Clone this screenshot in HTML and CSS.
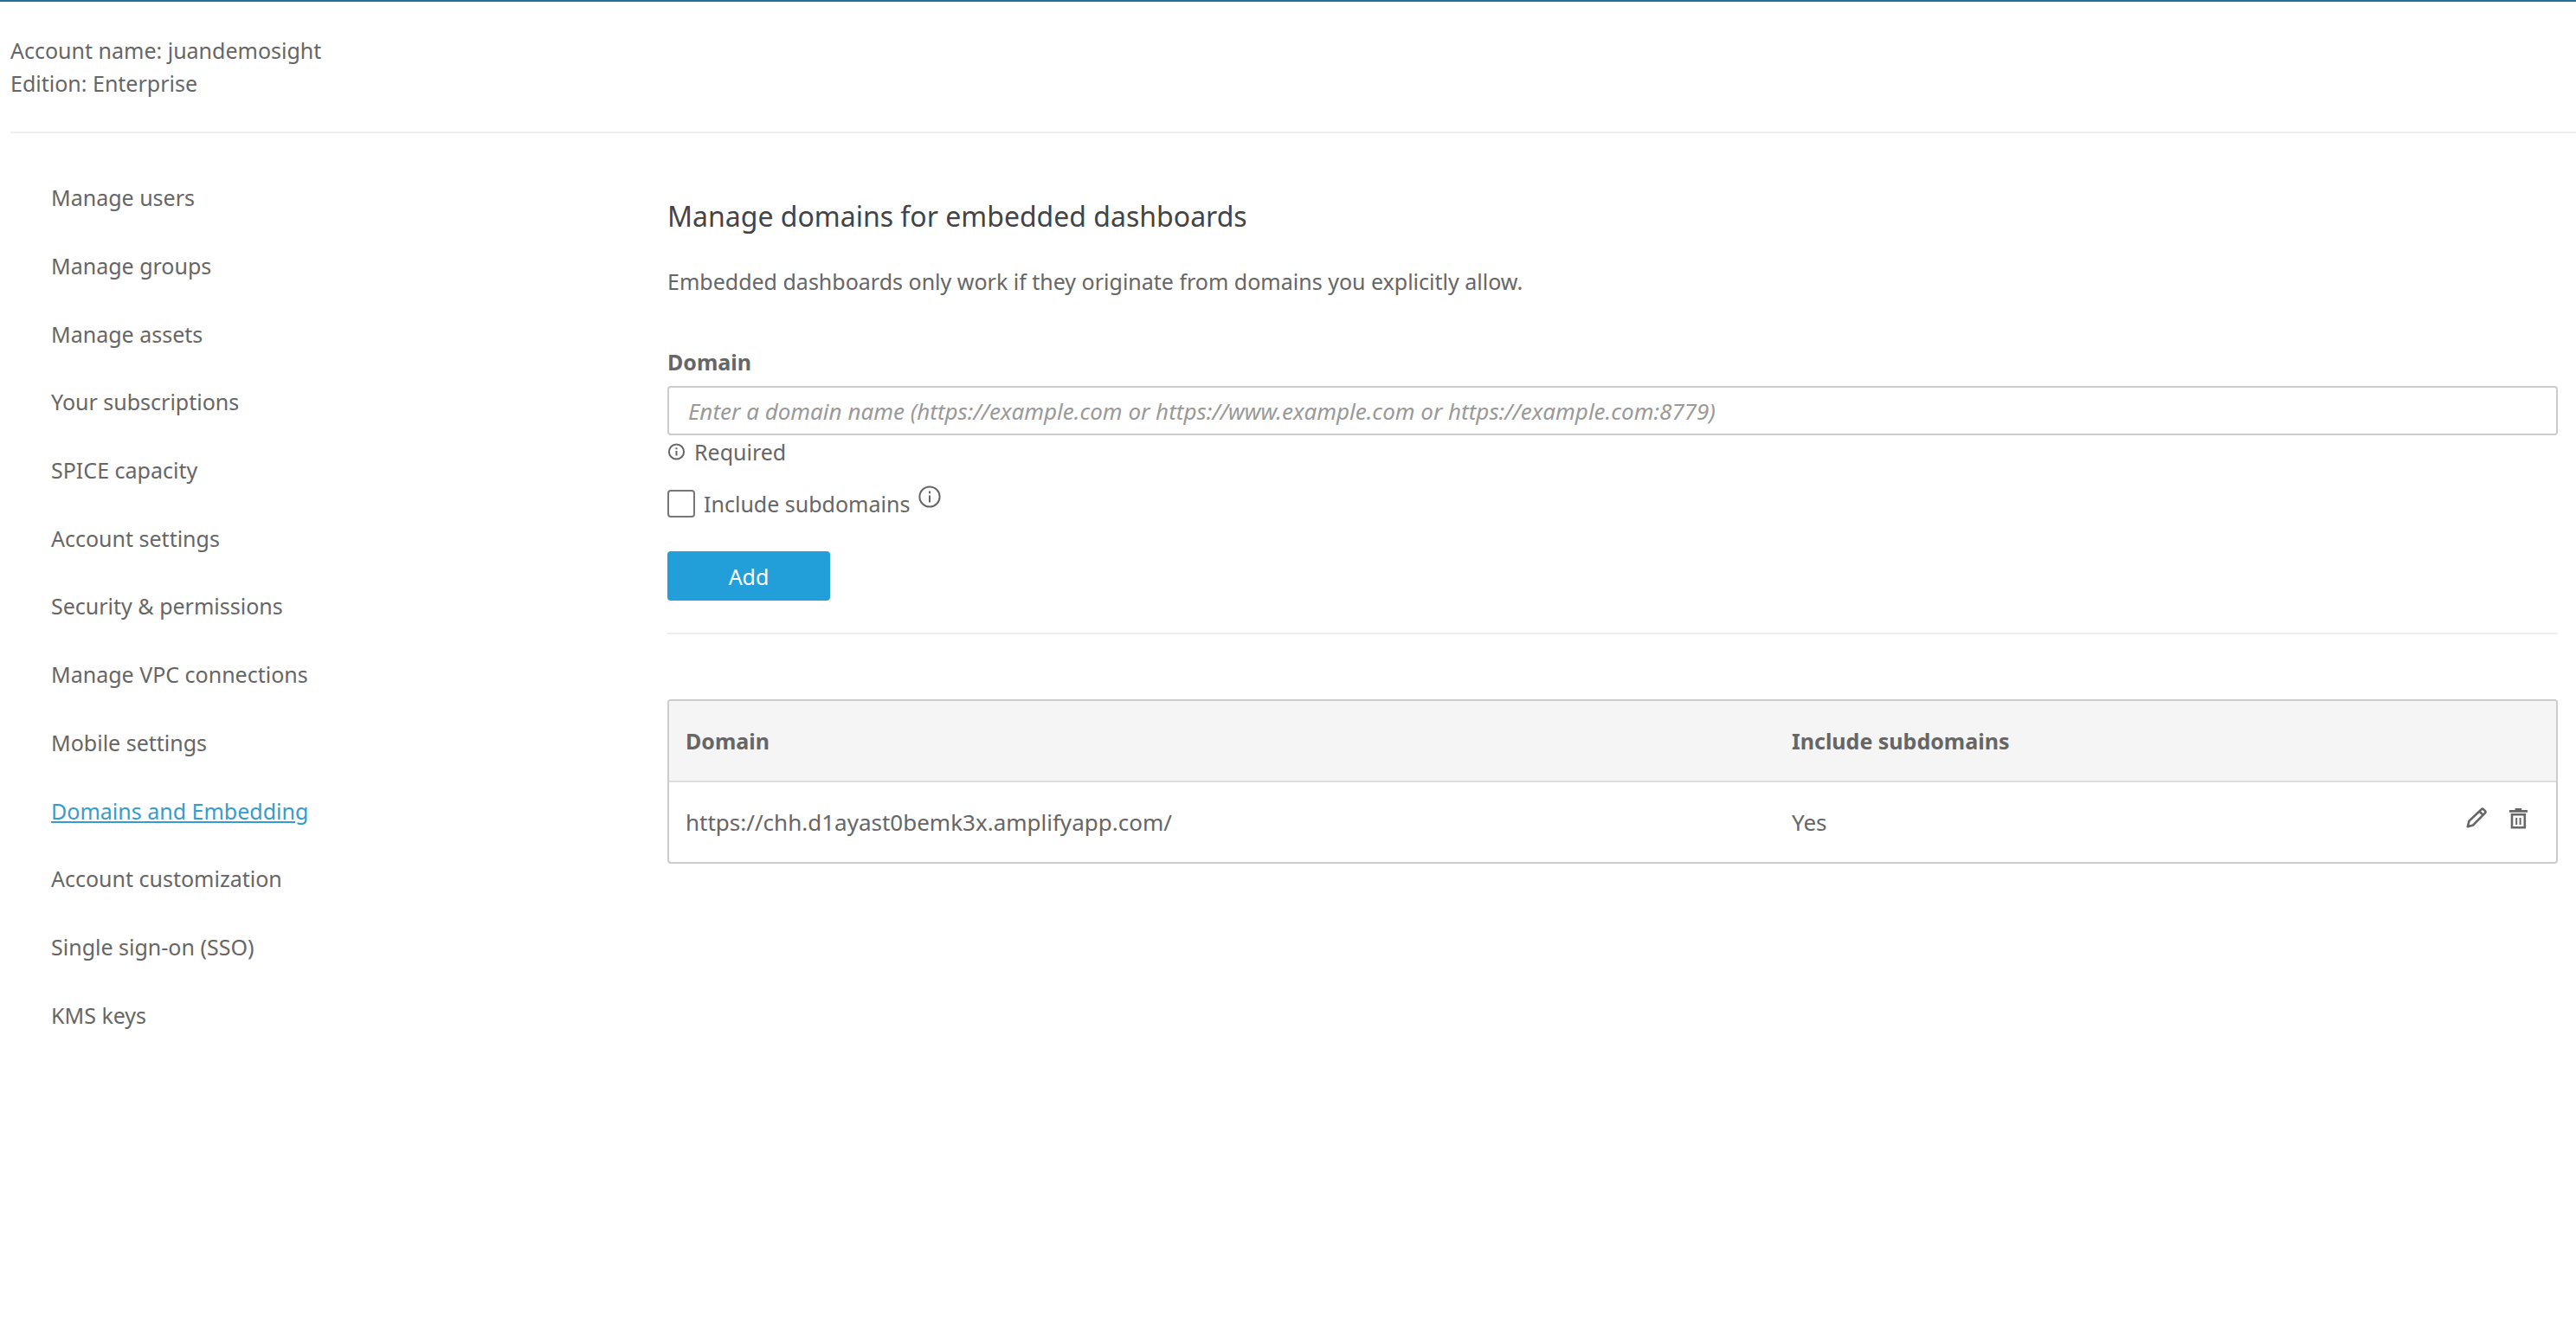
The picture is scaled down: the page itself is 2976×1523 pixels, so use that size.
FILE: index.html
```html
<!DOCTYPE html>
<html lang="en">
<head>
<meta charset="utf-8">
<meta name="viewport" content="width=device-width, initial-scale=1">
<title>Manage domains</title>
<link rel="stylesheet" href="styles.css">
</head>
<body>
<header class="account">
  <p>Account name: juandemosight</p>
  <p>Edition: Enterprise</p>
</header>
<div class="layout">
  <nav class="side-nav" aria-label="Account management">
    <a href="#users">Manage users</a>
    <a href="#groups">Manage groups</a>
    <a href="#assets">Manage assets</a>
    <a href="#subscriptions">Your subscriptions</a>
    <a href="#spice">SPICE capacity</a>
    <a href="#account">Account settings</a>
    <a href="#security">Security &amp; permissions</a>
    <a href="#vpc">Manage VPC connections</a>
    <a href="#mobile">Mobile settings</a>
    <a href="#domains" class="current" aria-current="page">Domains and Embedding</a>
    <a href="#customization">Account customization</a>
    <a href="#sso">Single sign-on (SSO)</a>
    <a href="#kms">KMS keys</a>
  </nav>
  <main class="content">
    <h1>Manage domains for embedded dashboards</h1>
    <p class="intro">Embedded dashboards only work if they originate from domains you explicitly allow.</p>
    <form class="domain-form">
      <label class="field-label" for="domain">Domain</label>
      <input class="text-field" id="domain" type="text" aria-describedby="domain-hint" placeholder="Enter a domain name (https://example.com or https://www.example.com or https://example.com:8779)">
      <p class="hint" id="domain-hint">
        <svg class="hint-icon" viewBox="0 0 20 20" aria-hidden="true"><circle cx="10" cy="10" r="8.6"/><path d="M10 9v5.5M10 5.2v2"/></svg>
        <span>Required</span>
      </p>
      <div class="check-row">
        <input class="check" id="subdomains" type="checkbox">
        <label for="subdomains">Include subdomains</label>
        <svg class="info-icon" viewBox="0 0 26 26" aria-hidden="true"><circle cx="13" cy="13" r="11.6"/><path d="M13 11.5v8M13 6.6v2.6"/></svg>
      </div>
      <button class="add" type="button">Add</button>
    </form>
    <div class="table-frame">
      <table class="domains">
        <thead>
          <tr><th class="col-domain" scope="col">Domain</th><th scope="col">Include subdomains</th><td class="col-actions"></td></tr>
        </thead>
        <tbody>
          <tr>
            <td>https://chh.d1ayast0bemk3x.amplifyapp.com/</td>
            <td>Yes</td>
            <td>
              <div class="actions">
                <button type="button" aria-label="Edit"><svg viewBox="0 0 26 26" aria-hidden="true"><path stroke-linejoin="round" stroke-width="2.6" d="M1.8 22.2 3.6 15.6 17.8 2.2Q18.9 1.2 20 2.2L22 4.2Q23 5.3 22 6.4L8.2 20.4ZM15.6 4.6l4.2 4.2"/></svg></button>
                <button type="button" aria-label="Delete"><svg viewBox="0 0 26 26" aria-hidden="true"><path stroke-width="2.6" d="M2 4.4h21M8.6 2.4h7.6M5 8.3h14.8v15H5Z"/><path d="M10.2 12v8M14.6 12v8"/></svg></button>
              </div>
            </td>
          </tr>
        </tbody>
      </table>
    </div>
  </main>
</div>
</body>
</html>
```
FILE: styles.css
```css
* {
  box-sizing: border-box;
}

body {
  margin: 0;
  border-top: 2px solid #1f719a;
  background: #fff;
  color: #666;
  font: 25px/38px "Noto Sans", "Open Sans", sans-serif;
}

h1,
p {
  margin: 0;
}

input,
button {
  margin: 0;
  font: inherit;
}

.account {
  margin-left: 12px;
  padding: 37px 0;
  border-bottom: 2px solid #eee;
}

.layout {
  display: flex;
}

.side-nav {
  flex: none;
  display: grid;
  grid-auto-rows: 1fr;
  align-items: center;
  justify-items: start;
  width: 771px;
  min-height: 1023px;
  margin-top: 35px;
  padding-left: 59px;
}

.side-nav a {
  color: inherit;
  text-decoration: none;
}

.side-nav .current {
  color: #379bd0;
  text-decoration: underline;
}

.content {
  flex: 1;
  padding: 72px 21px 0 0;
}

h1 {
  color: #444;
  font-size: 32px;
  font-weight: 400;
  line-height: 48px;
}

.intro {
  margin-top: 32px;
}

.domain-form {
  display: flex;
  flex-direction: column;
  align-items: flex-start;
  margin-top: 55px;
  padding-bottom: 37px;
  border-bottom: 2px solid #eee;
}

.field-label {
  font-weight: 700;
}

.text-field {
  width: 100%;
  height: 57px;
  margin-top: 9px;
  padding: 0 22px;
  border: 2px solid #ccc;
  border-radius: 4px;
  color: inherit;
  font-size: 26px;
}

.text-field::placeholder {
  color: #999;
  font-style: italic;
  opacity: 1;
}

.hint {
  display: flex;
  align-items: center;
  gap: 10px;
}

svg {
  fill: none;
  stroke: #666;
  stroke-width: 2;
}

.hint-icon {
  width: 21px;
  height: 20px;
}

.check-row {
  display: flex;
  align-items: center;
  gap: 10px;
  height: 42px;
  margin-top: 20px;
}

.check {
  appearance: none;
  width: 32px;
  height: 32px;
  border: 2px solid #777;
  border-radius: 4px;
  background: #fff;
}

.info-icon {
  width: 26px;
  height: 26px;
  align-self: flex-start;
}

.add {
  width: 188px;
  height: 57px;
  margin-top: 34px;
  border: 0;
  border-radius: 4px;
  background: #229fd8;
  color: #fff;
}

.table-frame {
  margin-top: 75px;
  border: 2px solid #ccc;
  border-radius: 4px;
  overflow: hidden;
}

.domains {
  width: 100%;
  border-collapse: collapse;
  table-layout: fixed;
}

.domains th,
.domains td {
  height: 93px;
  padding: 0 19px;
  text-align: left;
}

.domains tbody {
  font-size: 26px;
}

.domains thead {
  background: #f5f5f5;
  border-bottom: 2px solid #ddd;
}

.col-domain {
  width: 1278px;
}

.col-actions {
  width: 160px;
}

.actions {
  display: flex;
  justify-content: flex-end;
  gap: 22px;
  padding: 0 11px 8px 0;
}

.actions button {
  width: 26px;
  height: 26px;
  padding: 0;
  border: 0;
  background: none;
}

.actions svg {
  display: block;
}
```
